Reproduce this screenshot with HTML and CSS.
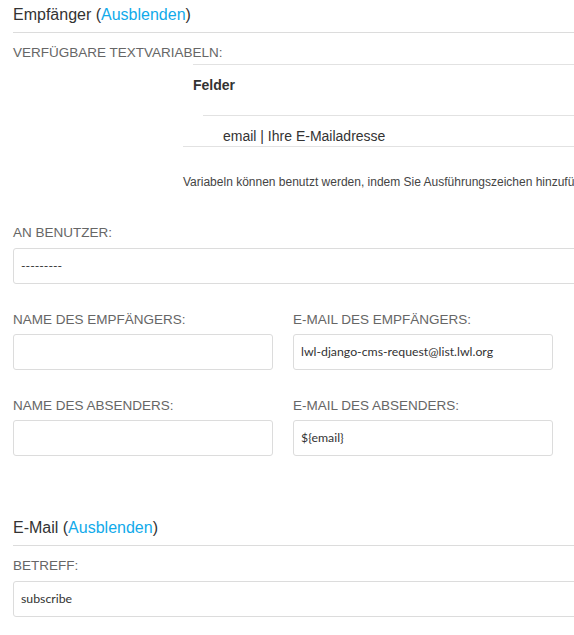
FILE: index.html
```html
<!DOCTYPE html>
<html lang="de">
<head>
<meta charset="utf-8">
<title>Formular</title>
<link rel="stylesheet" href="styles.css">
</head>
<body>
<div class="page">
  <h2 class="section-title">Empfänger (<a href="#" class="toggle">Ausblenden</a>)</h2>

  <div class="label label-vars">Verfügbare Textvariabeln:</div>
  <div class="vars">
    <div class="vars-head">Felder</div>
    <div class="vars-body">
      <div class="vars-row">email | Ihre E-Mailadresse</div>
    </div>
    <p class="help">Variabeln können benutzt werden, indem Sie Ausführungszeichen hinzufügen</p>
  </div>

  <div class="field field-first">
    <div class="label">An Benutzer:</div>
    <div class="input">---------</div>
  </div>

  <div class="row">
    <div class="field">
      <div class="label">Name des Empfängers:</div>
      <div class="input"></div>
    </div>
    <div class="field">
      <div class="label">E-Mail des Empfängers:</div>
      <div class="input">lwl-django-cms-request@list.lwl.org</div>
    </div>
  </div>

  <div class="row">
    <div class="field">
      <div class="label">Name des Absenders:</div>
      <div class="input"></div>
    </div>
    <div class="field">
      <div class="label">E-Mail des Absenders:</div>
      <div class="input">${email}</div>
    </div>
  </div>

  <h2 class="section-title section-second">E-Mail (<a href="#" class="toggle">Ausblenden</a>)</h2>
  <div class="field field-subject">
    <div class="label">Betreff:</div>
    <div class="input">subscribe</div>
  </div>
</div>
</body>
</html>
```

FILE: styles.css
```css
html, body {
  margin: 0;
  padding: 0;
  background: #fff;
  overflow: hidden;
}

body {
  font-family: "Liberation Sans", Helvetica, Arial, sans-serif;
  color: #333;
}

.page {
  width: 640px;
  padding-left: 13px;
}

.section-title {
  margin: 0;
  padding: 5px 0 7px;
  font-size: 16px;
  line-height: 20px;
  font-weight: normal;
  color: #333;
  border-bottom: 1px solid #dcdcdc;
}

.section-second {
  margin-top: 57px;
}

.toggle {
  color: #11aaea;
  text-decoration: none;
}

.label {
  font-size: 13.5px;
  line-height: 16px;
  color: #666;
  text-transform: uppercase;
  margin-bottom: 7px;
}

.label-vars {
  margin-top: 12px;
  margin-bottom: 3px;
}

.vars {
  margin-left: 170px;
}

.vars-head {
  margin-left: 10px;
  border-top: 1px solid #e2e2e2;
  padding: 12px 0 22px;
  font-size: 14px;
  line-height: 16px;
  font-weight: bold;
  color: #333;
}

.vars-body {
  border-bottom: 1px solid #e2e2e2;
}

.vars-row {
  margin-left: 20px;
  border-top: 1px solid #e2e2e2;
  padding: 12px 0 2px 20px;
  font-size: 14px;
  line-height: 16px;
  color: #333;
}

.help {
  margin: 28px 0 0;
  font-size: 12px;
  line-height: 14px;
  color: #444;
  white-space: nowrap;
}

.field-first {
  margin-top: 36px;
  margin-bottom: 28px;
}

.row {
  display: grid;
  grid-template-columns: 260px 260px;
  column-gap: 20px;
  margin-bottom: 28px;
}

.row .label {
  margin-bottom: 6px;
}

.field-subject {
  margin-top: 12px;
}

.input {
  box-sizing: border-box;
  height: 36px;
  border: 1px solid #dcdcdc;
  border-radius: 3px;
  padding: 0 7px;
  font-family: Lato, "Open Sans", sans-serif;
  font-size: 12.3px;
  line-height: 34px;
  color: #333;
  white-space: nowrap;
  overflow: hidden;
}
```
